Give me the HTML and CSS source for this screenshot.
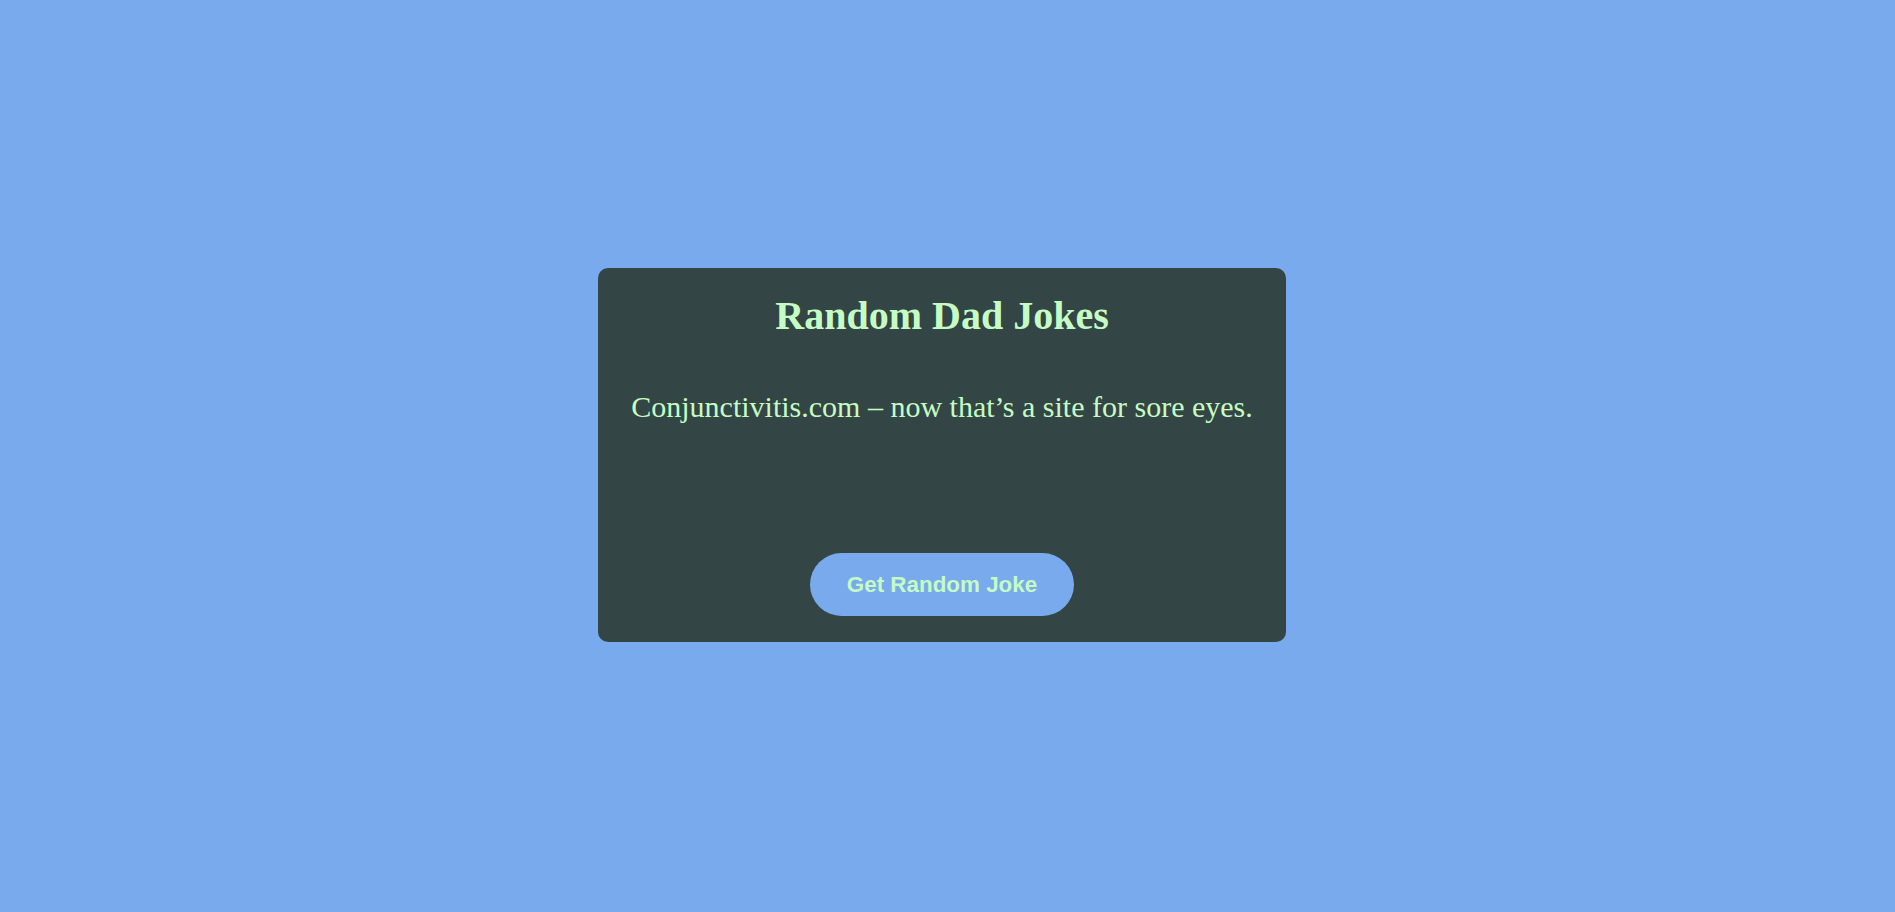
FILE: index.html
```html
<!DOCTYPE html>
<html lang="en">
<head>
<meta charset="utf-8">
<title>Random Dad Jokes</title>
<link rel="stylesheet" href="styles.css">
</head>
<body>
  <main class="card">
    <h1 class="title">Random Dad Jokes</h1>
    <p class="joke">Conjunctivitis.com – now that’s a site for sore eyes.</p>
    <button class="btn" type="button">Get Random Joke</button>
  </main>
</body>
</html>
```
FILE: styles.css
```css
html, body {
  margin: 0;
  height: 100%;
}
body {
  background: #79aaee;
  display: flex;
  align-items: center;
  justify-content: center;
  padding-right: 11px;
  padding-bottom: 2px;
  box-sizing: border-box;
  font-family: "Liberation Serif", "Times New Roman", serif;
}
.card {
  box-sizing: border-box;
  width: 688px;
  height: 374px;
  background: #344545;
  border-radius: 10px;
  padding: 24px 20px 26px;
  display: flex;
  flex-direction: column;
  align-items: center;
  color: #c4fcc4;
  text-align: center;
}
.title {
  margin: 0;
  font-size: 40px;
  line-height: 48px;
  font-weight: bold;
}
.joke {
  margin: 49px 0 0;
  font-size: 30px;
  line-height: 36px;
  flex: 1;
}
.btn {
  border: none;
  background: #79aaee;
  color: #c4fcc4;
  font-family: "Liberation Sans", Arial, sans-serif;
  font-weight: bold;
  font-size: 22.4px;
  line-height: 25px;
  padding: 19px 37px;
  border-radius: 32px;
  cursor: pointer;
}
```
